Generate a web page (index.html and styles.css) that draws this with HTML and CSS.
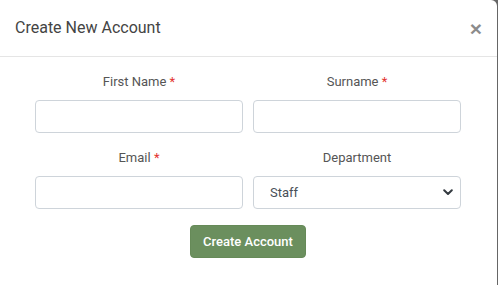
FILE: index.html
```html
<!DOCTYPE html>
<html lang="en">
  <head>
    <meta charset="UTF-8" />
    <meta name="viewport" content="width=device-width, initial-scale=1.0" />
    <title>Create New Account</title>
    <link rel="stylesheet" href="styles.css">
  </head>
  <body>
    <div class="modal">
      <div class="modal-header">
        <h4 class="modal-title">Create New Account</h4>
        <button type="button" class="close">&times;</button>
      </div>
      <form class="modal-body">
        <div class="form-grid">
          <div class="form-group">
            <label for="first">First Name <span class="req">*</span></label>
            <input id="first" type="text" class="form-control" />
          </div>
          <div class="form-group">
            <label for="surname">Surname <span class="req">*</span></label>
            <input id="surname" type="text" class="form-control" />
          </div>
          <div class="form-group">
            <label for="email">Email <span class="req">*</span></label>
            <input id="email" type="email" class="form-control" />
          </div>
          <div class="form-group">
            <label for="dept">Department</label>
            <div class="select-wrap">
              <select id="dept" class="form-control">
                <option>Staff</option>
                <option>Manager</option>
              </select>
              <svg class="chevron" width="10" height="7" viewBox="0 0 10 7">
                <path d="M1.2 1.2 L5 5 L8.8 1.2" fill="none" stroke="#343a40" stroke-width="2" stroke-linecap="round" stroke-linejoin="round" />
              </svg>
            </div>
          </div>
        </div>
        <div class="actions">
          <button type="submit" class="btn-create">Create Account</button>
        </div>
      </form>
    </div>
  </body>
</html>
```

FILE: styles.css
```css
body {
  margin: 0;
  background-color: #666;
  font-family: "Roboto", "Liberation Sans", sans-serif;
  color: #333;
  overflow: hidden;
}

.modal {
  width: 497px;
  min-height: 300px;
  background-color: #fff;
  border-top-right-radius: 6px;
}

.modal-header {
  display: flex;
  justify-content: space-between;
  align-items: center;
  padding: 15px;
  border-bottom: 1px solid #e5e5e5;
}

.modal-title {
  margin: 0;
  font-size: 16px;
  font-weight: 400;
  line-height: 26px;
  color: #444;
}

.close {
  padding: 0;
  border: 0;
  background: transparent;
  font-family: "Liberation Sans", sans-serif;
  font-size: 21px;
  font-weight: 700;
  line-height: 1;
  color: #000;
  opacity: 0.45;
}

.modal-body {
  padding: 15px 36px 0 35px;
}

.form-grid {
  display: grid;
  grid-template-columns: 1fr 1fr;
  column-gap: 10px;
  row-gap: 15px;
}

.form-group {
  display: flex;
  flex-direction: column;
  text-align: center;
}

.form-group label {
  font-size: 13px;
  line-height: 20px;
  color: #555;
  margin-bottom: 8px;
}

.req {
  color: #e3342f;
}

.form-control {
  box-sizing: border-box;
  width: 100%;
  height: 33px;
  padding: 6px 12px;
  border: 1px solid #ced4da;
  border-radius: 4px;
  background-color: #fff;
  font-family: inherit;
  font-size: 13px;
  color: #495057;
}

.select-wrap {
  position: relative;
}

select.form-control {
  appearance: none;
  -webkit-appearance: none;
  padding-left: 16px;
}

.chevron {
  position: absolute;
  right: 8px;
  top: 13px;
  pointer-events: none;
}

.actions {
  display: flex;
  justify-content: center;
  padding-top: 16px;
}

.btn-create {
  height: 33px;
  padding: 0 12px;
  border: 1px solid #668a58;
  border-radius: 4px;
  background-color: #6b8f5e;
  color: #fff;
  font-family: inherit;
  font-size: 13px;
  font-weight: 500;
}
```
